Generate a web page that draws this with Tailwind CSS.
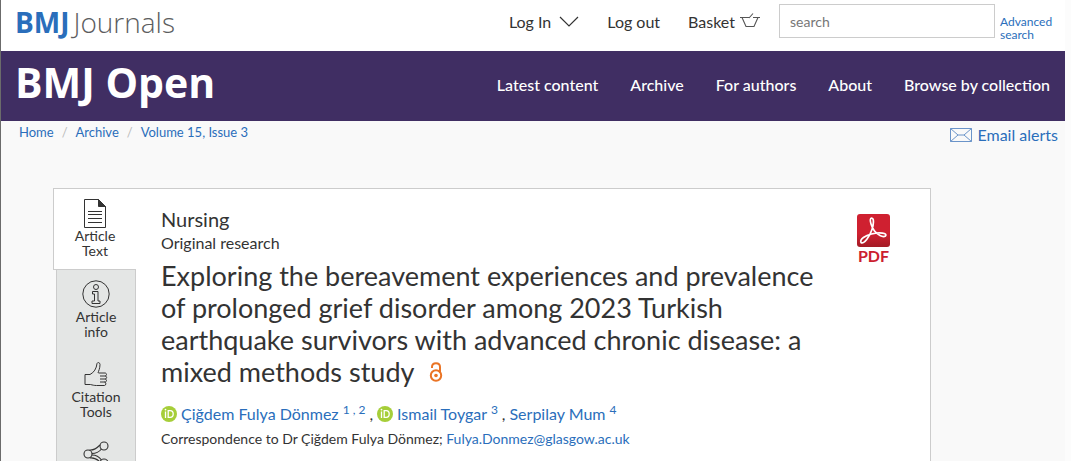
<!DOCTYPE html>
<html lang="en">

<head>
    <meta charset="UTF-8">
    <meta name="viewport" content="width=device-width, initial-scale=1.0">
    <title>BMJ Open</title>
    <script src="https://cdn.jsdelivr.net/npm/@tailwindcss/browser@4"></script>
</head>

<body class="bg-[#fcfcfc] font-['Lato','Noto_Sans',sans-serif] text-[#333333] h-screen overflow-hidden">
<div class="mr-1.5 min-h-full border-l border-[#6b6b6b] bg-[#f9f9f9]">

    <!-- Top bar -->
    <header class="flex h-[51px] justify-between bg-white pl-3.5 pr-3">
        <a href="#" class="flex pt-1 font-['Open_Sans',sans-serif] text-[28px] leading-9 text-[#5c5d60]">
            <span class="font-bold text-[#2a6ebb]">BMJ</span><span class="pl-1 font-light">Journals</span>
        </a>
        <div class="flex">
            <nav class="flex items-start gap-7 pt-2.5 pr-[18px] text-base leading-6">
                <a href="#" class="flex items-center gap-2">Log In
                    <svg class="h-3 w-5" viewBox="0 0 20 12" fill="none" stroke="#333" stroke-width="1.2"><path d="M1 1l9 9 9-9"/></svg>
                </a>
                <a href="#" class="flex items-center">Log out</a>
                <a href="#" class="flex items-center gap-1">Basket
                    <svg class="mb-1 h-4 w-[22px]" viewBox="0 0 22 16" fill="none" stroke="#555" stroke-width="1.1"><path d="M10.500 5.500H1M21 5.500h-7M3 5.500l4 9h8l4-9M10 6l4-4.500"/></svg>
                </a>
            </nav>
            <form class="flex pt-1">
                <input type="search" aria-label="Search" placeholder="search" class="h-[34px] w-54 border border-[#cccccc] bg-white px-2.5 text-sm placeholder:text-[#777777]">
                <a href="#" class="w-[58px] pt-[11px] pl-[5px] text-xs leading-[13px] text-[#2a6ebb]">Advanced search</a>
            </form>
        </div>
    </header>

    <!-- Journal banner -->
    <div class="flex h-[70px] items-center justify-between bg-[#402e63] pl-3.5 pr-[15px] text-white">
        <a href="#" class="pb-2 font-['Open_Sans',sans-serif] text-[41px] leading-[50px] font-bold">BMJ Open</a>
        <nav class="flex gap-8 pb-0.5 text-base font-medium">
            <a href="#">Latest content</a>
            <a href="#">Archive</a>
            <a href="#">For authors</a>
            <a href="#">About</a>
            <a href="#">Browse by collection</a>
        </nav>
    </div>

    <!-- Breadcrumb and alerts -->
    <div class="flex h-[67px] justify-between pl-4.5 pr-[7px] text-[#2a6ebb]">
        <nav class="flex gap-2 pt-px text-[13px] leading-5" aria-label="Breadcrumb">
            <a href="#">Home</a>
            <span class="text-[#bbbbbb]">/</span>
            <a href="#">Archive</a>
            <span class="text-[#bbbbbb]">/</span>
            <a href="#">Volume 15, Issue 3</a>
        </nav>
        <a href="#" class="flex gap-[5px] pt-0.5 text-base leading-6">
            <svg class="mt-1 h-4 w-[22px]" viewBox="0 0 22 16" fill="none" stroke="#6b94c9"><path d="M.5 1.500h21v13H.5zM.5 1.500L8 8h6l7.500-6.500M.5 14.500L8 8M21.500 14.500L14 8"/></svg>
            Email alerts
        </a>
    </div>

    <!-- Article -->
    <main class="mr-[134px] ml-[52px] flex">
        <nav class="flex w-[83px] shrink-0 flex-col items-end text-center text-sm leading-[15px]">
            <a href="#" class="flex h-[82px] w-full flex-col items-center border border-r-0 border-[#cccccc] bg-white pt-2.5">
                <svg class="h-[29px] w-[22px]" viewBox="0 0 22 29" fill="none" stroke="#333"><path d="M.5.500h14l7 7v21H.5z"/><path fill="#333" d="M14.500.500v7h7z"/><path d="M4 12.500h14M4 15.500h14M4 19.500h14M4 23.500h14"/></svg>
                <span>Article<br>Text</span>
            </a>
            <div class="flex h-[191px] w-20 flex-col overflow-hidden border-x border-[#cccccc] bg-[#e4e6e5]">
                <a href="#" class="flex h-[81px] shrink-0 flex-col items-center pt-2.5">
                    <svg class="mb-px h-7 w-7" viewBox="0 0 28 28" fill="none" stroke="#333"><circle cx="14" cy="14" r="13.200"/><circle cx="14" cy="7" r="2.500"/><path d="M10.500 11.500h5.500v9.500h2v2.500h-8V21h2.500v-7h-2z"/></svg>
                    <span>Article<br>info</span>
                </a>
                <a href="#" class="flex h-[81px] shrink-0 flex-col items-center pt-[11px]">
                    <svg class="h-6 w-6" viewBox="0 0 24 24" fill="none" stroke="#333" stroke-linejoin="round"><path d="M1 12.500h5c4-2 6.500-6 7-11 .5-1.500 3-1.200 3 1 0 4-1.500 6.500-2 8.500M1 12.500v10h5.500c2 .5 3.500 1 6 1h8M14.500 11h6.500c2 0 2 3 0 3h-5M21 14c2.200 0 2.200 3 0 3h-5M21 17c2 0 2 3 0 3h-5M20.500 20c1.800 0 1.800 3.500 0 3.500"/></svg>
                    <span class="pt-[3px]">Citation<br>Tools</span>
                </a>
                <a href="#" class="flex shrink-0 flex-col items-center pt-[9px]" aria-label="Share">
                    <svg class="h-7 w-[26px]" viewBox="0 0 26 28" fill="none" stroke="#333" stroke-width="1.100"><circle cx="5" cy="13" r="4"/><circle cx="21" cy="5" r="4"/><circle cx="21" cy="22" r="4"/><path d="M6.500 9c4 .5 7-1.500 10.500-5M9 12.500c4 0 7-1.500 9.500-4.500M9 14c4 0 7 1.500 9.500 5M7 17c4-.5 7 1 10 4"/></svg>
                </a>
            </div>
        </nav>

        <article class="flex h-[273px] flex-1 justify-between border-t border-r border-[#cccccc] bg-white pr-10 pl-[25px]">
            <div class="max-w-[670px] pt-[18px]">
                <p class="text-xl leading-6">Nursing</p>
                <p class="text-base leading-6">Original research</p>
                <h1 class="pt-[5px] text-[27px] leading-8">Exploring the bereavement experiences and prevalence of prolonged grief disorder among 2023 Turkish earthquake survivors with advanced chronic disease: a mixed methods study
                    <svg class="ml-2 inline h-5 w-3.5 align-baseline" viewBox="0 0 14 20" fill="none" stroke="#ea7425" stroke-width="2"><circle cx="7" cy="13.500" r="5.200"/><circle cx="7" cy="13.500" r="1.800" fill="#ea7425" stroke="none"/><path d="M3 6V5c0-5 8-5 8 0v6"/></svg>
                </h1>
                <p class="flex items-center gap-1 pt-3.5 text-base leading-6">
                    <svg class="h-4 w-4" viewBox="0 0 16 16"><circle cx="8" cy="8" r="8" fill="#a6ce39"/><path fill="none" stroke="#fff" stroke-width="1.300" d="M4.500 5.500v6.500M7.200 4.700h2c4 0 4 6.700 0 6.700h-2z"/><circle cx="4.500" cy="3.600" r=".9" fill="#fff"/></svg>
                    <a href="#" class="text-[#2a6ebb]">Çiğdem Fulya Dönmez <sup class="text-xs">1 , 2</sup></a><span>,</span>
                    <svg class="h-4 w-4" viewBox="0 0 16 16"><circle cx="8" cy="8" r="8" fill="#a6ce39"/><path fill="none" stroke="#fff" stroke-width="1.300" d="M4.500 5.500v6.500M7.200 4.700h2c4 0 4 6.700 0 6.700h-2z"/><circle cx="4.500" cy="3.600" r=".9" fill="#fff"/></svg>
                    <a href="#" class="text-[#2a6ebb]">Ismail Toygar <sup class="text-xs">3</sup></a><span>,</span>
                    <a href="#" class="text-[#2a6ebb]">Serpilay Mum <sup class="text-xs">4</sup></a>
                </p>
                <p class="pt-px text-sm leading-6">Correspondence to Dr Çiğdem Fulya Dönmez; <a href="#" class="text-[#2a6ebb]">Fulya.Donmez@glasgow.ac.uk</a></p>
            </div>
            <a href="#" class="flex flex-col items-center pt-[25px] text-base leading-[18px] font-bold text-[#cc2030]">
                <svg class="h-[33px] w-[33px]" viewBox="0 0 33 33" fill="none">
                    <defs><linearGradient id="pdf" x2="0" y2="1"><stop offset=".6" stop-color="#cf2030"/><stop offset="1" stop-color="#a31b25"/></linearGradient></defs>
                    <rect width="33" height="33" rx="3" fill="url(#pdf)"/>
                    <path stroke="#fff" stroke-width="1.700" stroke-linejoin="round" d="M14.500 4c-3 1 .5 10 3 13 3 3.500 8 7 11 5 2.500-3-6-4-14-2-6 1.500-12 5-10.500 8.500 3 2.500 9-7 11-13C16.500 11 17.500 4 14.500 4z"/>
                </svg>
                PDF
            </a>
        </article>
    </main>
</div>
</body>

</html>
